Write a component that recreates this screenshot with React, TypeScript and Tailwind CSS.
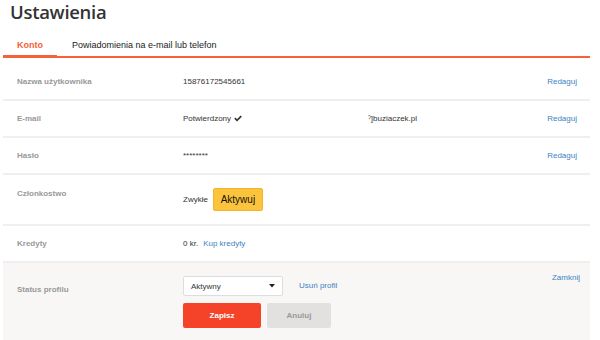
import React from 'react';

type RowProps = {
    label: string;
    children?: React.ReactNode;
    action?: string;
    top?: boolean;
};

function Row(props: RowProps): JSX.Element {
    return (
        <div
            className={
                'flex border-b-2 border-[#efefef] pl-[14px] pr-[13px] py-[13px]' +
                (props.top ? ' items-start' : ' items-center')
            }
        >
            <div
                className={
                    'w-[166px] shrink-0 text-[8px] font-bold text-[#999]' +
                    (props.top ? ' pt-[1px]' : '')
                }
            >
                {props.label}
            </div>
            <div className="flex-1 flex items-center text-[8px] text-[#333]">
                {props.children}
            </div>
            {props.action && (
                <a className="text-[8px] text-[#3d82c4]">{props.action}</a>
            )}
        </div>
    );
}

export default function App(): JSX.Element {
    return (
        <div className="w-[600px] h-[340px] overflow-hidden bg-white font-['Liberation_Sans',Arial,sans-serif] leading-[9px]">
            <div className="pl-[3px] w-[590px]">
                <h1 className="pl-[7px] pt-[1px] h-[32px] font-['Open_Sans',sans-serif] font-semibold text-[18.5px] leading-[22px] tracking-[-0.3px] text-[#333]">
                    Ustawienia
                </h1>

                <div className="flex border-b-2 border-[#f4623a] h-[26px]">
                    <div className="w-[54px] -mb-[2px] border-b-[3px] border-[#f4623a] flex justify-center pt-[8px]">
                        <span className="text-[9px] leading-[10px] font-bold text-[#f4623a]">
                            Konto
                        </span>
                    </div>
                    <div className="pl-[15px] pt-[8px] text-[9px] leading-[10px] text-[#222]">
                        Powiadomienia na e-mail lub telefon
                    </div>
                </div>

                <div className="pt-[6px]">
                    <Row label="Nazwa użytkownika" action="Redaguj">
                        15876172545661
                    </Row>
                    <Row label="E-mail" action="Redaguj">
                        <span className="w-[185px] flex items-center gap-[3px]">
                            Potwierdzony
                            <svg
                                width="8"
                                height="7"
                                viewBox="0 0 10 8"
                                fill="#333"
                            >
                                <path d="M0.3 4.4 L1.8 2.9 L3.8 4.9 L8.3 0.3 L9.8 1.8 L3.8 7.6 Z" />
                            </svg>
                        </span>
                        <span>ˀ]buziaczek.pl</span>
                    </Row>
                    <Row label="Hasło" action="Redaguj">
                        ********
                    </Row>
                    <Row label="Członkostwo" top>
                        <span>Zwykłe</span>
                        <button className="ml-[5px] w-[50px] h-[23px] rounded-[2px] bg-[#fcc33c] border border-[#f2b52a] text-[10px] text-[#111]">
                            Aktywuj
                        </button>
                    </Row>
                    <Row label="Kredyty">
                        <span>0 kr.</span>
                        <a className="ml-[5px] text-[#3d82c4]">Kup kredyty</a>
                    </Row>
                </div>

                <div className="bg-[#f8f7f6] h-[80px] flex pl-[14px] pr-[10px] pt-[13px]">
                    <div className="w-[166px] shrink-0 pt-[9px] text-[8px] font-bold text-[#999]">
                        Status profilu
                    </div>
                    <div className="flex-1 flex flex-col gap-[7px]">
                        <div className="flex items-center">
                            <div className="w-[100px] h-[20px] bg-white border border-[#ddd] rounded-[2px] flex items-center justify-between pl-[7px] pr-[7px] text-[8px] text-[#333]">
                                Aktywny
                                <svg width="6" height="4" viewBox="0 0 6 4">
                                    <path d="M0 0 H6 L3 3.5 Z" fill="#222" />
                                </svg>
                            </div>
                            <a className="ml-[16px] -mt-[2px] text-[8px] text-[#3d82c4]">
                                Usuń profil
                            </a>
                        </div>
                        <div className="flex gap-[6px]">
                            <button className="w-[78px] h-[25px] rounded-[2px] bg-[#f5432a] text-white text-[8px] font-bold">
                                Zapisz
                            </button>
                            <button className="w-[64px] h-[25px] rounded-[2px] bg-[#e2e1e0] text-[#999] text-[8px] font-bold">
                                Anuluj
                            </button>
                        </div>
                    </div>
                    <a className="-mt-[3px] text-[8px] text-[#3d82c4]">Zamknij</a>
                </div>
            </div>
        </div>
    );
}
